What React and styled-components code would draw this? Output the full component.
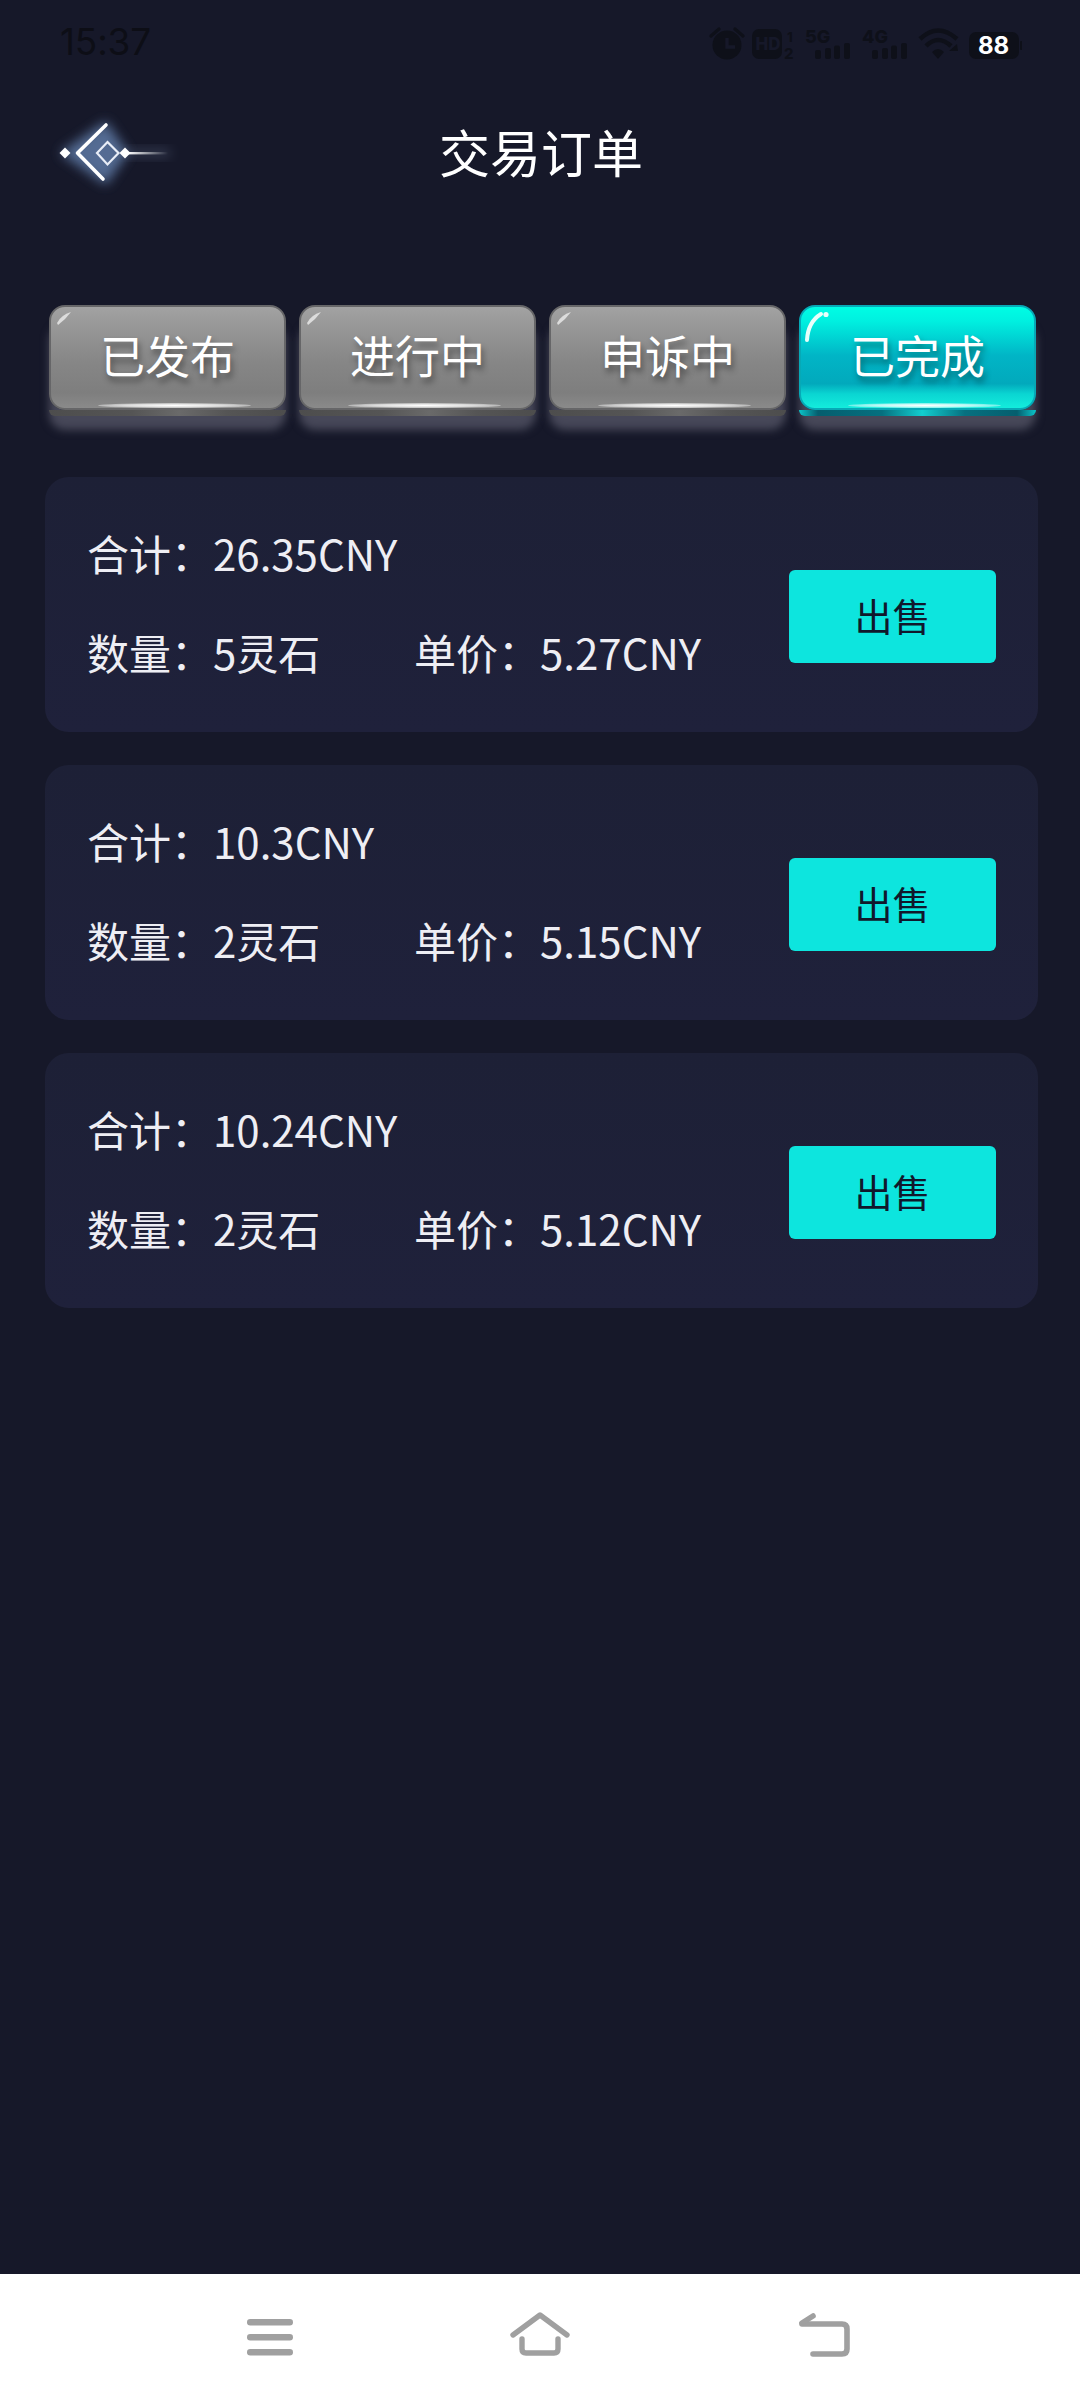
import React from "react";
import styled, { createGlobalStyle } from "styled-components";

const Global = createGlobalStyle`
  html, body { margin: 0; padding: 0; background: #161829; }
  * { box-sizing: border-box; }
`;
const CJK = `"Noto Sans CJK SC", "Noto Sans", sans-serif`;

const Page = styled.div`
  width: 1080px; height: 2400px; display: flex; flex-direction: column;
  background: #161829; font-family: ${CJK}; overflow: hidden;
`;
const StatusBar = styled.div`
  height: 84px; display: flex; justify-content: space-between; align-items: flex-start;
  padding: 22px 58px 0 60px;
`;
const Time = styled.div`
  font-family: Inter, Roboto, sans-serif; font-size: 37px; line-height: 40px; letter-spacing: -0.2px; color: #0d0e16;
`;
const StatusIcons = styled.div`
  display: flex; align-items: flex-start; height: 40px;
`;
const Header = styled.header`
  height: 134px; position: relative; display: flex; align-items: center; justify-content: center;
`;
const BackWrap = styled.div`
  position: absolute; left: 50px; top: 24px; width: 130px; height: 90px;
`;
const Title = styled.h1`
  margin: 0; padding-left: 2px; color: #fff; font-size: 51px; font-weight: 400; line-height: 70px;
`;
const Tabs = styled.div`
  margin-top: 87px; padding: 0 44px 0 49px; display: grid; grid-template-columns: repeat(4, 237px); column-gap: 13px;
`;
const Tab = styled.div`
  position: relative; height: 105px; border-radius: 16px; display: flex; align-items: center; justify-content: center;
  padding-bottom: 5px;
  border: 2px solid ${p => (p.$active ? "#07a9b6" : "#666668")};
  background: ${p => p.$active
    ? "linear-gradient(180deg,#00fde4 0%,#00f0e0 14%,#01b5c6 48%,#02a9bc 76%,#0ad5d2 86%,#14ecdc 100%)"
    : "linear-gradient(180deg,#a2a2a2 0%,#979797 20%,#868686 55%,#7e7e7e 85%,#8a8a8a 100%)"};
  box-shadow: 0 20px 8px 0 #474859;
  color: #fff; font-size: 45px; line-height: 60px; text-shadow: 2px 5px 6px rgba(0,0,0,.42);
`;
const CornerShine = styled.svg`
  position: absolute; left: 3px; top: 3px; width: 36px; height: 42px; pointer-events: none; filter: blur(0.5px);
`;
const Lip = styled.span`
  position: absolute; left: -2px; right: -2px; top: calc(100% + 2px); height: 6px; border-radius: 0 0 12px 12px;
  background: ${p => p.$active
    ? "linear-gradient(90deg,#0bc4c8 0%,#055e6e 8%,#06707f 35%,#12cfd0 52%,#06707f 70%,#055e6e 92%,#0bc4c8 100%)"
    : "linear-gradient(90deg,#4d4d4d 0%,#555 35%,#6a6a6a 55%,#555 75%,#4d4d4d 100%)"};
`;
const BottomGlow = styled.span`
  position: absolute; left: 20%; right: 14%; bottom: 0; height: 5px; border-radius: 50%;
  background: radial-gradient(ellipse at center, #ffffff 0%, rgba(255,255,255,.7) 45%, rgba(255,255,255,0) 100%);
`;
const List = styled.main`
  margin-top: 67px; padding: 0 42px 0 45px; display: flex; flex-direction: column; gap: 33px; flex: 1;
`;
const Card = styled.section`
  height: 255px; border-radius: 24px; background: linear-gradient(180deg,#1d2036,#1f213b);
  display: flex; justify-content: space-between; align-items: center; padding: 0 42px 0 42px;
`;
const Info = styled.div`
  margin-top: -5px; display: flex; flex-direction: column; gap: 41px; color: #eeeef4; font-size: 42px; line-height: 58px;
`;
const Row = styled.div`
  display: flex; white-space: nowrap;
`;
const Cell = styled.span`
  width: ${p => p.$w || "auto"};
`;
const SellButton = styled.button`
  width: 207px; height: 93px; margin-top: 24px; border: 0; border-radius: 6px; background: #0de5de; color: #10182c;
  font-family: ${CJK}; font-size: 38px; line-height: 50px; padding: 0 0 3px;
`;
const NavBar = styled.nav`
  height: 126px; background: #fff; position: relative;
`;
const NavSlot = styled.div`
  position: absolute; top: ${p => p.$y}px; left: ${p => p.$x}px; display: flex;
`;
const SmallText = styled.text`
  font-family: Inter, Roboto, sans-serif; font-weight: 800;
`;

const BackIcon = () => (
  <svg width="130" height="90" viewBox="50 109 130 90">
    <defs>
      <filter id="gl" x="-60%" y="-60%" width="220%" height="220%"><feGaussianBlur stdDeviation="6" /></filter>
      <linearGradient id="ln" x1="0" x2="1"><stop offset="0" stopColor="#fff" /><stop offset="1" stopColor="#fff" stopOpacity="0" /></linearGradient>
    </defs>
    <path d="M60 154 L106 122 L128 154 L106 186 Z" fill="#5f7aa6" opacity=".85" filter="url(#gl)" />
    <rect x="125" y="150" width="45" height="8" fill="#8fa4c8" opacity=".25" filter="url(#gl)" />
    <path d="M65 148.5 L70.5 154 L65 159.5 L59.5 154 Z" fill="#fff" />
    <path d="M106 126 L77.5 154 L103 180" fill="none" stroke="#fff" strokeWidth="3.6" strokeLinecap="round" strokeLinejoin="round" />
    <path d="M107.5 143 L118.5 154 L107.5 165.5 L97 154 Z" fill="none" stroke="#e8edf7" strokeWidth="2.2" />
    <path d="M125 148.5 L130.5 154 L125 159.5 L119.5 154 Z" fill="#fff" />
    <rect x="128" y="153" width="40" height="2.4" fill="url(#ln)" />
  </svg>
);

const Bars = ({ x }) => (
  <>
    <rect x={x} y="48" width="6" height="9" rx="2" />
    <rect x={x + 10} y="46" width="6" height="11" rx="2" />
    <rect x={x + 19} y="43.5" width="6" height="13.5" rx="2" />
    <rect x={x + 29} y="41" width="6" height="16" rx="2" />
  </>
);

const StatusGlyphs = () => (
  <svg width="320" height="40" viewBox="700 20 320 40" fill="#0e1019">
    <circle cx="725" cy="43" r="14.5" />
    <path d="M709 34 L717 27 M733 27 L741 34" stroke="#0e1019" strokeWidth="3.4" strokeLinecap="round" />
    <path d="M725 36 V45 H733" stroke="#161829" strokeWidth="3.4" fill="none" />
    <rect x="750" y="27" width="30" height="30" rx="7" />
    <SmallText x="753.5" y="48" fontSize="17" fill="#161829">HD</SmallText>
    <SmallText x="785" y="40" fontSize="13">1</SmallText>
    <SmallText x="782" y="57" fontSize="15">2</SmallText>
    <SmallText x="803" y="41" fontSize="18">5G</SmallText>
    <Bars x={813} />
    <SmallText x="860" y="41" fontSize="18">4G</SmallText>
    <Bars x={870} />
    <path d="M918 37 Q936 20 955 37" fill="none" stroke="#0e1019" strokeWidth="4.5" />
    <path d="M924 44 Q936 32 949 44" fill="none" stroke="#0e1019" strokeWidth="4.5" />
    <path d="M930 50 Q936 44 942 50 L936 57 Z" />
    <path d="M947 49 L955 42 L956 49 Z" />
    <rect x="967" y="30" width="50" height="27" rx="7" />
    <rect x="1018" y="39" width="3" height="9" rx="1" />
    <SmallText x="976" y="52" fontSize="24" fill="#fff" style={{ fontWeight: 700 }}>88</SmallText>
  </svg>
);

const MenuIcon = () => (
  <svg width="46" height="37" viewBox="0 0 46 37" fill="#a0a0a0">
    <rect x="0" y="0" width="46" height="6.4" rx="3.2" /><rect x="0" y="15" width="46" height="6.4" rx="3.2" /><rect x="0" y="30" width="46" height="6.4" rx="3.2" />
  </svg>
);
const HomeIcon = () => (
  <svg width="60" height="44" viewBox="0 0 60 44" fill="none" stroke="#a0a0a0" strokeWidth="5.4" strokeLinecap="round" strokeLinejoin="round">
    <path d="M3 23 L30 3 L57 23" />
    <path d="M12 27 V37 Q12 41 16 41 H44 Q48 41 48 37 V27" />
  </svg>
);
const ReturnIcon = () => (
  <svg width="52" height="44" viewBox="0 0 52 44" fill="none" stroke="#a0a0a0" strokeWidth="5.6" strokeLinecap="round" strokeLinejoin="round">
    <path d="M3 11 H43 Q48 11 48 16 V36 Q48 41 43 41 H14" />
    <path d="M3 10 L14 3" />
  </svg>
);

const orders = [
  { total: "26.35", qty: 5, price: "5.27" },
  { total: "10.3", qty: 2, price: "5.15" },
  { total: "10.24", qty: 2, price: "5.12" },
];
const tabs = ["已发布", "进行中", "申诉中", "已完成"];

export default function App() {
  return (
    <Page>
      <Global />
      <StatusBar>
        <Time>15:37</Time>
        <StatusIcons><StatusGlyphs /></StatusIcons>
      </StatusBar>
      <Header>
        <BackWrap><BackIcon /></BackWrap>
        <Title>交易订单</Title>
      </Header>
      <Tabs>
        {tabs.map((t, i) => {
          const active = i === 3;
          return (
            <Tab key={t} $active={active}>
              <CornerShine viewBox="0 0 36 42">
                {active ? (
                  <>
                    <path d="M3 30 Q4 12 17 4" fill="none" stroke="#e8fffb" strokeWidth="4" strokeLinecap="round" />
                    <circle cx="22" cy="4.5" r="2.6" fill="#e8fffb" />
                  </>
                ) : (
                  <path d="M3 13 Q7 5 17 2 Q12 9 4 15 Z" fill="#dcdcdc" />
                )}
              </CornerShine>
              {t}
              <Lip $active={active} />
              <BottomGlow />
            </Tab>
          );
        })}
      </Tabs>
      <List>
        {orders.map((o, i) => (
          <Card key={i}>
            <Info>
              <Row>合计：{o.total}CNY</Row>
              <Row>
                <Cell $w="327px">数量：{o.qty}灵石</Cell>
                <Cell>单价：{o.price}CNY</Cell>
              </Row>
            </Info>
            <SellButton>出售</SellButton>
          </Card>
        ))}
      </List>
      <NavBar>
        <NavSlot $x={247} $y={45}><MenuIcon /></NavSlot>
        <NavSlot $x={510} $y={38}><HomeIcon /></NavSlot>
        <NavSlot $x={799} $y={39}><ReturnIcon /></NavSlot>
      </NavBar>
    </Page>
  );
}
